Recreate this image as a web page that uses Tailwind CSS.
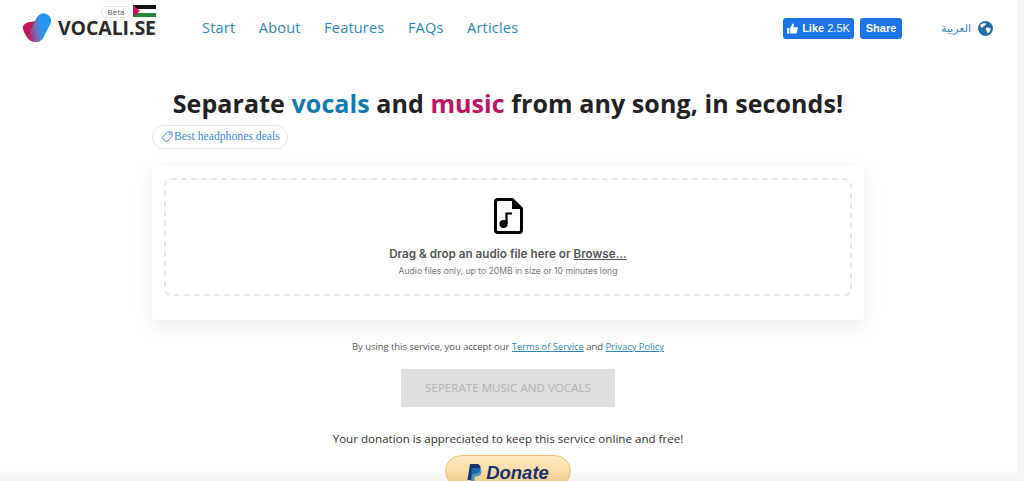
<!DOCTYPE html>
<html lang="en">
<head>
  <meta charset="UTF-8" />
  <title>Vocali.se</title>
  <script src="https://cdn.jsdelivr.net/npm/@tailwindcss/browser@4"></script>
</head>
<body class="bg-white h-[481px] overflow-hidden relative font-['Open_Sans',sans-serif]">

  <!-- Scrollbar strip -->
  <div class="absolute top-0 right-0 bottom-0 w-[7px] bg-[#f6f6f6]"></div>

  <!-- Header -->
  <header class="h-[56px] flex items-center relative">
    <div class="relative w-[202px] h-full shrink-0">
      <svg class="absolute left-[22px] top-[12px]" width="31" height="31" viewBox="0 0 31 31">
        <defs>
          <linearGradient id="lg" x1="0.75" y1="0.25" x2="0.3" y2="0.95">
            <stop offset="0.3" stop-color="#2196f3" />
            <stop offset="0.65" stop-color="#6f74b8" />
            <stop offset="1" stop-color="#b0307a" />
          </linearGradient>
        </defs>
        <path d="M1 17C0 14 3 10.500 8 10L14 9L18 27C15 30.500 11 30.500 8 28.500C5 26 2 21 1 17Z" fill="#c2185b" />
        <rect x="10.500" y="0.500" width="15" height="30.500" rx="7.500" transform="rotate(27 18 15.750)" fill="url(#lg)" />
      </svg>
      <span class="absolute left-[58px] top-[20px] text-[19.5px] leading-[16px] font-bold text-[#2a2a2a] tracking-[-0.1px]">VOCALI.SE</span>
      <span class="absolute left-[101px] top-[6px] w-[30px] h-[12px] rounded-full border border-[#e6e6e6] text-[8px] leading-[10px] text-[#555] text-center">Beta</span>
      <svg class="absolute left-[133px] top-[5px]" width="23" height="12" viewBox="0 0 23 12">
        <rect width="23" height="4" fill="#111" />
        <rect y="4" width="23" height="4" fill="#fff" />
        <rect y="8" width="23" height="4" fill="#1f8a3b" />
        <path d="M0 0L7 6L0 12Z" fill="#c2185b" />
      </svg>
    </div>
    <nav class="flex gap-[23.5px] text-[14.5px] text-[#2b86bd] tracking-[0.2px] -mt-[1px]">
      <a>Start</a>
      <a>About</a>
      <a>Features</a>
      <a>FAQs</a>
      <a>Articles</a>
    </nav>
    <div class="ml-auto flex items-center mr-[122px] gap-[6px] font-['Liberation_Sans',sans-serif] text-[11px] text-white font-bold">
      <span class="h-[21px] w-[71px] bg-[#1b74e8] rounded-[3px] flex items-center justify-center gap-[4px]">
        <svg width="11" height="11" viewBox="0 0 12 12" fill="#fff"><path d="M0 5.500h2.500V11.500H0zM3.500 5.500L6 0.500c1.200 0 1.600 1 1.400 2L7 4.500h3.800c.8 0 1.200.7 1 1.400l-1.200 4.800c-.2.500-.6.800-1.100.8H3.500z" /></svg>
        <span>Like <span class="font-normal">2.5K</span></span>
      </span>
      <span class="h-[21px] w-[42px] bg-[#1b74e8] rounded-[3px] flex items-center justify-center">Share</span>
    </div>
    <div class="absolute left-[941px] top-[20px] flex items-center gap-[7px]">
      <span class="text-[11px] leading-[16px] text-[#3d8bb8] font-['Noto_Sans','DejaVu_Sans',sans-serif]" dir="rtl">العربية</span>
      <svg width="15" height="15" viewBox="0 0 16 16">
        <circle cx="8" cy="8" r="8" fill="#1f6fa8" />
        <path d="M3 3.500c2-1 4-1.500 5.500-1 .5 1-.5 2-1.500 2.500S5 7 3.500 7C2.500 6 2.300 4.500 3 3.500zM9 7c1.500-.5 3.500 0 4.500 1 0 2-1.200 4-3 5-1-.5-1-2-1.500-3S8 7.500 9 7z" fill="#fff" />
      </svg>
    </div>
  </header>

  <main class="w-[1016px] flex flex-col items-center">
    <h1 class="mt-[29px] text-[25px] leading-[36px] font-bold text-[#222] tracking-[0.08px] whitespace-nowrap">
      Separate <span class="text-[#0f7ab5]">vocals</span> and <span class="text-[#bb1265]">music</span> from any song, in seconds!
    </h1>

    <div class="w-[712px] mt-[4px]">
      <a class="inline-flex items-center gap-[1px] h-[24px] w-[136px] pl-[8px] rounded-full border border-[#e4e4e4] text-[11.7px] text-[#3b87e0] whitespace-nowrap font-['Liberation_Serif',serif]">
        <svg width="12" height="12" viewBox="0 0 12 12" fill="none" stroke="#3b87e0" stroke-width="1"><path d="M6.500 1H11V5.500L5.500 11L1 6.500Z" stroke-linejoin="round" /><circle cx="8.800" cy="3.200" r="0.500" /></svg>
        Best headphones deals
      </a>

      <!-- Upload card -->
      <div class="mt-[17px] h-[154px] bg-white rounded-[4px] shadow-[0_6px_22px_rgba(0,0,0,0.08)] px-[12px] pt-[12px]">
        <div class="h-[118px] border-2 border-dashed border-[#e8e8e8] rounded-[7px] flex flex-col items-center font-['Inter',sans-serif]">
          <svg class="mt-[18px]" width="29" height="36" viewBox="0 0 29 36" fill="none">
            <path d="M4 1.500H18.500L27.500 10.500V32C27.500 33.400 26.400 34.500 25 34.500H4C2.600 34.500 1.500 33.400 1.500 32V4C1.500 2.600 2.600 1.500 4 1.500Z" stroke="#000" stroke-width="3" stroke-linejoin="round" />
            <path d="M18 1.500V11H27.500Z" fill="#000" />
            <circle cx="9.500" cy="26" r="4" fill="#000" />
            <path d="M12.500 26V15.500H18" stroke="#000" stroke-width="2.200" />
          </svg>
          <p class="mt-[11px] text-[11.7px] leading-[18px] font-semibold text-[#555]">Drag &amp; drop an audio file here or <u>Browse...</u></p>
          <p class="mt-[1px] text-[8.6px] leading-[14px] text-[#777]">Audio files only, up to 20MB in size or 10 minutes long</p>
        </div>
      </div>
    </div>

    <p class="mt-[20px] text-[9.4px] leading-[14px] text-[#555]">By using this service, you accept our <a class="underline text-[#2b86bd]">Terms of Service</a> and <a class="underline text-[#2b86bd]">Privacy Policy</a></p>

    <button class="mt-[15px] w-[214px] h-[38px] bg-[#dedede] rounded-[2px] text-[11.6px] text-[#b4b4b4]">SEPERATE MUSIC AND VOCALS</button>

    <p class="mt-[23px] text-[11.6px] leading-[18px] text-[#333]">Your donation is appreciated to keep this service online and free!</p>

    <div class="mt-[7px] w-[126px] h-[32px] pt-[3px] shrink-0 rounded-full bg-gradient-to-b from-[#fee6bd] to-[#fcd592] border border-[#f5bd70] flex items-center justify-center gap-[4px] font-['Liberation_Sans',sans-serif] italic font-bold text-[18.5px] text-[#17326e]">
      <svg width="15" height="18" viewBox="0 0 15 18"><path d="M3 0H9C12.500 0 14 2 13.500 5C13 8.500 10.500 10 7.500 10H5.500L4.500 16H0.500Z" fill="#17326e" /><path d="M5 4H10C12.500 4 15 5 14.500 8C14 11 12 12.500 9 12.500H8L7 18H3.500Z" fill="#1f7fc4" opacity="0.75" /></svg>
      <span>Donate</span>
    </div>
  </main>

  <!-- Soft fade at the bottom edge -->
  <div class="absolute left-0 right-[7px] bottom-0 h-[12px] bg-gradient-to-b from-transparent to-black/5 pointer-events-none"></div>
</body>
</html>
